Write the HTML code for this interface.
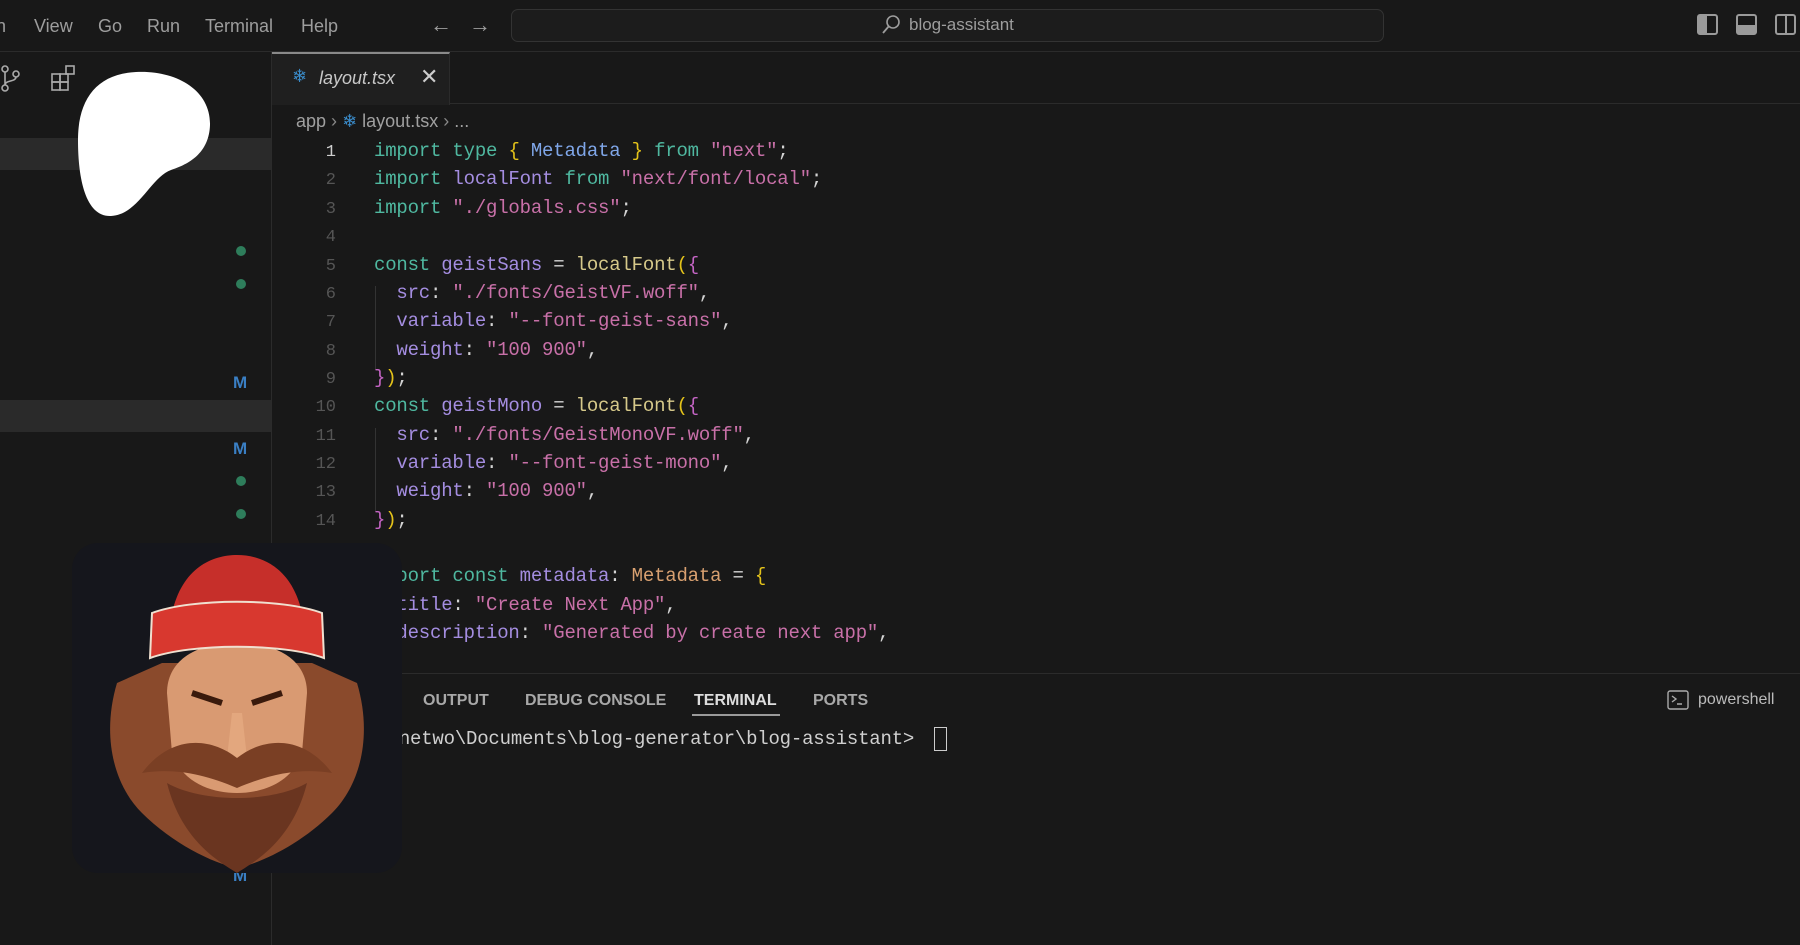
<!DOCTYPE html>
<html><head><style>
*{margin:0;padding:0;box-sizing:border-box}
body{width:1800px;height:945px;background:#181818;position:relative;overflow:hidden;font-family:"Liberation Sans",sans-serif;color:#ccc}
.a{position:absolute}
.menu{top:16px;font-size:18px;color:#9d9d9d}
.code{font-family:"Liberation Mono",monospace;font-size:19px;white-space:pre;color:#d4d4d4;letter-spacing:-0.2px}
.ln{position:absolute;left:300px;width:36px;text-align:right;font-family:"Liberation Mono",monospace;font-size:17px;color:#555}
.k{color:#4fb8a0}.s{color:#c870a8}.v{color:#a48de0}.f{color:#d6c98a}.b{color:#e3c21a}.p{color:#c464c4}.t{color:#7fa6e8}.o{color:#d8a070}
.line{position:absolute;left:374px}
.tab{font-size:16px;font-weight:bold;color:#a8a8a8;top:692px}
</style></head><body>
<div class="a" style="left:0;top:51px;width:1800px;height:1px;background:#2b2b2b"></div>
<div class="a menu" style="left:-4px">n</div>
<div class="a menu" style="left:34px">View</div>
<div class="a menu" style="left:98px">Go</div>
<div class="a menu" style="left:147px">Run</div>
<div class="a menu" style="left:205px">Terminal</div>
<div class="a menu" style="left:301px">Help</div>
<div class="a" style="left:430px;top:12px;font-size:22px;color:#9d9d9d">←</div>
<div class="a" style="left:469px;top:12px;font-size:22px;color:#9d9d9d">→</div>
<div class="a" style="left:511px;top:9px;width:873px;height:33px;border:1px solid #333;border-radius:7px;background:#1c1c1c"></div>
<svg class="a" style="left:880px;top:14px" width="22" height="22" viewBox="0 0 22 22"><circle cx="13" cy="8" r="6" fill="none" stroke="#9d9d9d" stroke-width="1.6"/><path d="M9 12L3 19" stroke="#9d9d9d" stroke-width="1.8"/></svg>
<div class="a" style="left:909px;top:15px;font-size:17px;color:#9d9d9d">blog-assistant</div>
<svg class="a" style="left:1697px;top:13px" width="102" height="24" viewBox="0 0 102 24"><rect x="1" y="2" width="19" height="19" rx="2" fill="none" stroke="#9a9a9a" stroke-width="2"/><rect x="2" y="3" width="8" height="17" fill="#9a9a9a"/><rect x="40" y="2" width="19" height="19" rx="2" fill="none" stroke="#9a9a9a" stroke-width="2"/><rect x="41" y="12" width="17" height="8" fill="#9a9a9a"/><rect x="79" y="2" width="19" height="19" rx="2" fill="none" stroke="#9a9a9a" stroke-width="2"/><path d="M89 3V20" stroke="#9a9a9a" stroke-width="2"/></svg>
<div class="a" style="left:271px;top:52px;width:1px;height:893px;background:#2b2b2b"></div>
<svg class="a" style="left:0;top:64px" width="24" height="30" viewBox="0 0 24 30"><circle cx="5" cy="5" r="3" fill="none" stroke="#aaa" stroke-width="1.6"/><circle cx="5" cy="24" r="3" fill="none" stroke="#aaa" stroke-width="1.6"/><circle cx="16" cy="10" r="3" fill="none" stroke="#aaa" stroke-width="1.6"/><path d="M5 8V21M16 13C16 18 5 16 5 21" fill="none" stroke="#aaa" stroke-width="1.6"/></svg>
<svg class="a" style="left:50px;top:64px" width="28" height="28" viewBox="0 0 28 28"><rect x="2" y="10" width="8" height="8" fill="none" stroke="#aaa" stroke-width="1.6"/><rect x="10" y="10" width="8" height="8" fill="none" stroke="#aaa" stroke-width="1.6"/><rect x="2" y="18" width="8" height="8" fill="none" stroke="#aaa" stroke-width="1.6"/><rect x="10" y="18" width="8" height="8" fill="none" stroke="#aaa" stroke-width="1.6"/><rect x="16" y="2" width="8" height="8" fill="none" stroke="#aaa" stroke-width="1.6"/></svg>
<div class="a" style="left:0;top:138px;width:271px;height:32px;background:#2a2a2a"></div>
<div class="a" style="left:0;top:400px;width:271px;height:32px;background:#2a2a2a"></div>
<svg class="a" style="left:76px;top:70px" width="136" height="148" viewBox="0 0 136 148"><path d="M60 2C100 0 135 20 134 55C133 85 110 95 95 100C75 107 62 145 35 146C10 147 2 110 2 70C2 30 20 4 60 2Z" fill="#fff"/></svg>
<div class="a" style="left:236px;top:246px;width:10px;height:10px;border-radius:5px;background:#2e7d5b"></div>
<div class="a" style="left:236px;top:279px;width:10px;height:10px;border-radius:5px;background:#2e7d5b"></div>
<div class="a" style="left:236px;top:476px;width:10px;height:10px;border-radius:5px;background:#2e7d5b"></div>
<div class="a" style="left:236px;top:509px;width:10px;height:10px;border-radius:5px;background:#2e7d5b"></div>
<div class="a" style="left:233px;top:373px;font-size:17px;font-weight:bold;color:#3a7fc4">M</div>
<div class="a" style="left:233px;top:439px;font-size:17px;font-weight:bold;color:#3a7fc4">M</div>
<div class="a" style="left:233px;top:866px;font-size:17px;font-weight:bold;color:#3a7fc4">M</div>
<div class="a" style="left:272px;top:52px;width:1528px;height:52px;background:#181818;border-bottom:1px solid #2b2b2b"></div>
<div class="a" style="left:272px;top:52px;width:178px;height:53px;background:#1f1f1f;border-top:2px solid #8a8a8a;border-right:1px solid #2b2b2b"></div>
<div class="a" style="left:292px;top:66px;font-size:18px;color:#3a8bc9">❄</div>
<div class="a" style="left:319px;top:68px;font-size:18px;font-style:italic;color:#c8c8c8">layout.tsx</div>
<div class="a" style="left:420px;top:64px;font-size:22px;color:#ccc">✕</div>
<div class="a" style="left:296px;top:111px;font-size:18px;color:#a0a0a0">app <span style="color:#888">›</span> <span style="color:#3a8bc9">❄</span> layout.tsx <span style="color:#888">›</span> ...</div>
<div class="a" style="left:375px;top:286px;width:1px;height:84px;background:#333"></div>
<div class="a" style="left:375px;top:428px;width:1px;height:84px;background:#333"></div>
<div class="ln" style="top:143px;color:#cfcfcf">1</div>
<div class="ln" style="top:171px">2</div><div class="ln" style="top:200px">3</div><div class="ln" style="top:228px">4</div><div class="ln" style="top:257px">5</div><div class="ln" style="top:285px">6</div><div class="ln" style="top:313px">7</div><div class="ln" style="top:342px">8</div><div class="ln" style="top:370px">9</div><div class="ln" style="top:398px">10</div><div class="ln" style="top:427px">11</div><div class="ln" style="top:455px">12</div><div class="ln" style="top:483px">13</div><div class="ln" style="top:512px">14</div>
<div class="code">
<div class="line" style="top:140px"><span class="k">import type</span> <span class="b">{</span> <span class="t">Metadata</span> <span class="b">}</span> <span class="k">from</span> <span class="s">"next"</span>;</div>
<div class="line" style="top:168px"><span class="k">import</span> <span class="v">localFont</span> <span class="k">from</span> <span class="s">"next/font/local"</span>;</div>
<div class="line" style="top:197px"><span class="k">import</span> <span class="s">"./globals.css"</span>;</div>
<div class="line" style="top:254px"><span class="k">const</span> <span class="v">geistSans</span> = <span class="f">localFont</span><span class="b">(</span><span class="p">{</span></div>
<div class="line" style="top:282px">  <span class="v">src</span>: <span class="s">"./fonts/GeistVF.woff"</span>,</div>
<div class="line" style="top:310px">  <span class="v">variable</span>: <span class="s">"--font-geist-sans"</span>,</div>
<div class="line" style="top:339px">  <span class="v">weight</span>: <span class="s">"100 900"</span>,</div>
<div class="line" style="top:367px"><span class="p">}</span><span class="b">)</span>;</div>
<div class="line" style="top:395px"><span class="k">const</span> <span class="v">geistMono</span> = <span class="f">localFont</span><span class="b">(</span><span class="p">{</span></div>
<div class="line" style="top:424px">  <span class="v">src</span>: <span class="s">"./fonts/GeistMonoVF.woff"</span>,</div>
<div class="line" style="top:452px">  <span class="v">variable</span>: <span class="s">"--font-geist-mono"</span>,</div>
<div class="line" style="top:480px">  <span class="v">weight</span>: <span class="s">"100 900"</span>,</div>
<div class="line" style="top:509px"><span class="p">}</span><span class="b">)</span>;</div>
<div class="line" style="top:565px"><span class="k">export const</span> <span class="v">metadata</span>: <span class="o">Metadata</span> = <span class="b">{</span></div>
<div class="line" style="top:594px">  <span class="v">title</span>: <span class="s">"Create Next App"</span>,</div>
<div class="line" style="top:622px">  <span class="v">description</span>: <span class="s">"Generated by create next app"</span>,</div>
</div>
<div class="a" style="left:272px;top:673px;width:1528px;height:1px;background:#2b2b2b"></div>
<div class="a tab" style="left:423px">OUTPUT</div>
<div class="a tab" style="left:525px">DEBUG CONSOLE</div>
<div class="a tab" style="left:694px;color:#ddd">TERMINAL</div>
<div class="a" style="left:692px;top:714px;width:88px;height:2px;background:#9a9a9a"></div>
<div class="a tab" style="left:813px">PORTS</div>
<svg class="a" style="left:1667px;top:690px" width="22" height="20" viewBox="0 0 22 20"><rect x="1" y="1" width="20" height="18" rx="2" fill="none" stroke="#aaa" stroke-width="1.4"/><path d="M5 6L9 9L5 12M10 14H15" fill="none" stroke="#aaa" stroke-width="1.4"/></svg>
<div class="a" style="left:1698px;top:691px;font-size:16px;color:#bbb">powershell</div>
<div class="a code" style="left:298px;top:728px;font-size:19px;color:#cfcfcf">C:\Users\netwo\Documents\blog-generator\blog-assistant&gt;</div>
<div class="a" style="left:934px;top:727px;width:13px;height:24px;border:1.5px solid #ccc"></div>
<div class="a" style="left:72px;top:543px;width:330px;height:330px;border-radius:26px;background:#15161c;overflow:hidden">
<svg width="330" height="330" viewBox="0 0 330 330">
<path d="M45 140C30 190 40 240 70 270C100 300 140 320 165 325C190 320 230 300 260 270C290 240 300 190 285 140L240 120L90 120Z" fill="#8a4a2c"/>
<path d="M95 150C95 120 120 100 165 100C210 100 235 120 235 150L230 210C220 240 190 250 165 250C140 250 110 240 100 210Z" fill="#d99a72"/>
<path d="M120 150L150 160M180 160L210 150" stroke="#3a1a0c" stroke-width="6"/>
<path d="M160 170L155 215L175 215L170 170Z" fill="#e3a77e"/>
<path d="M70 230C100 190 140 195 165 215C190 195 230 190 260 230C230 225 200 230 165 245C130 230 100 225 70 230Z" fill="#7a3f24"/>
<path d="M95 240C110 300 150 320 165 330C180 320 220 300 235 240C200 260 130 260 95 240Z" fill="#6a3520"/>
<path d="M100 70C110 25 140 12 165 12C190 12 220 25 230 70Z" fill="#c62f2a"/>
<path d="M80 70C120 55 210 55 250 70L252 115C210 100 120 100 78 115Z" fill="#d8382f" stroke="#f0e0d0" stroke-width="2"/>
</svg></div>
</body></html>
